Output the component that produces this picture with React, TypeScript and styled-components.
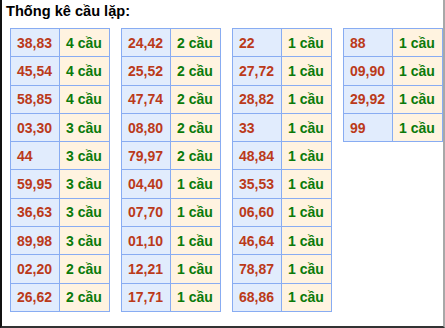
import React from "react";
import styled, { createGlobalStyle } from "styled-components";

type Pair = [string, number];

const columns: Pair[][] = [
  [
    ["38,83", 4],
    ["45,54", 4],
    ["58,85", 4],
    ["03,30", 3],
    ["44", 3],
    ["59,95", 3],
    ["36,63", 3],
    ["89,98", 3],
    ["02,20", 2],
    ["26,62", 2],
  ],
  [
    ["24,42", 2],
    ["25,52", 2],
    ["47,74", 2],
    ["08,80", 2],
    ["79,97", 2],
    ["04,40", 1],
    ["07,70", 1],
    ["01,10", 1],
    ["12,21", 1],
    ["17,71", 1],
  ],
  [
    ["22", 1],
    ["27,72", 1],
    ["28,82", 1],
    ["33", 1],
    ["48,84", 1],
    ["35,53", 1],
    ["06,60", 1],
    ["46,64", 1],
    ["78,87", 1],
    ["68,86", 1],
  ],
  [
    ["88", 1],
    ["09,90", 1],
    ["29,92", 1],
    ["99", 1],
  ],
];

const GlobalStyle = createGlobalStyle`
  html, body {
    margin: 0;
    padding: 0;
    background: #fff;
  }
  body {
    font-family: "Liberation Sans", Arial, sans-serif;
  }
`;

const Frame = styled.div`
  box-sizing: border-box;
  width: 445px;
  height: 328px;
  border-left: 2px solid #111;
  border-right: 2px solid #a8a8a8;
  border-bottom: 2px solid #333;
  padding: 2px 0 0 4px;
`;

const Title = styled.div`
  font-size: 14.6px;
  font-weight: bold;
  color: #000;
  line-height: 18px;
  height: 26px;
`;

const Tables = styled.div`
  display: grid;
  grid-template-columns: repeat(4, 100px);
  column-gap: 11px;
  align-items: start;
  padding-left: 4px;
`;

const StatTable = styled.table`
  width: 100px;
  border-collapse: collapse;
  table-layout: fixed;
`;

const Row = styled.tr`
  height: 28.3px;
`;

const Cell = styled.td<{ $kind: "num" | "count" }>`
  border: 1px solid #88acf2;
  padding: 0 0 0 6px;
  font-size: 14px;
  font-weight: bold;
  text-align: left;
  vertical-align: middle;
  white-space: nowrap;
  background: ${(p) => (p.$kind === "num" ? "#e1ecfd" : "#fff3e0")};
  color: ${(p) => (p.$kind === "num" ? "#bb3a1a" : "#0a7a0a")};
`;

export default function App() {
  return (
    <>
      <GlobalStyle />
      <Frame>
        <Title>Thống kê cầu lặp:</Title>
        <Tables>
          {columns.map((col, i) => (
            <StatTable key={i}>
              <colgroup>
                <col style={{ width: "49px" }} />
                <col />
              </colgroup>
              <tbody>
                {col.map(([num, n]) => (
                  <Row key={num}>
                    <Cell $kind="num">{num}</Cell>
                    <Cell $kind="count">{n} cầu</Cell>
                  </Row>
                ))}
              </tbody>
            </StatTable>
          ))}
        </Tables>
      </Frame>
    </>
  );
}
